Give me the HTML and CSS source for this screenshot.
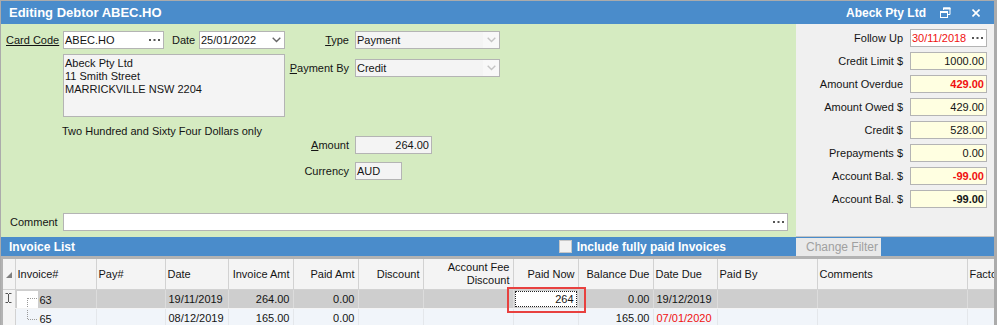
FILE: index.html
```html
<!DOCTYPE html>
<html lang="en">
<head>
    <meta charset="UTF-8">
    <title>Editing Debtor ABEC.HO</title>
    <link rel="stylesheet" href="styles.css">
</head>
<body>
<div class="window">
    <div class="titlebar">
        <span class="title">Editing Debtor ABEC.HO</span>
        <span class="company">Abeck Pty Ltd</span>
        <svg class="restore" width="11" height="11" viewBox="0 0 11 11">
            <path d="M3.5 3 V1 H10 V7.5 H8" fill="none" stroke="#fff" stroke-width="1"/>
            <path d="M3 1.5 H10.5" stroke="#fff" stroke-width="2"/>
            <rect x="0.5" y="4.5" width="7" height="6" fill="none" stroke="#fff" stroke-width="1"/>
            <path d="M0 5 H8" stroke="#fff" stroke-width="2"/>
        </svg>
        <svg class="close" width="8" height="8" viewBox="0 0 8 8">
            <path d="M0.5 0.5 L7.5 7.5 M7.5 0.5 L0.5 7.5" stroke="#fff" stroke-width="1.6"/>
        </svg>
    </div>

    <div class="main">
        <div class="form">
            <div class="top">
                <div class="left">
                    <div class="row">
                        <span class="label link">Card Code</span>
                        <div class="field code">
                            <span class="val">ABEC.HO</span>
                            <svg class="dots" width="11" height="2" viewBox="0 0 11 2"><rect x="0" width="2" height="2"/><rect x="4.5" width="2" height="2"/><rect x="9" width="2" height="2"/></svg>
                        </div>
                        <span class="label date-label">Date</span>
                        <div class="field date">
                            <span class="val">25/01/2022</span>
                            <svg class="chev" width="9" height="6" viewBox="0 0 9 6"><path d="M0.7 0.7 L4.5 4.5 L8.3 0.7" fill="none" stroke="#666" stroke-width="1.4"/></svg>
                        </div>
                    </div>
                    <div class="address">
                        Abeck Pty Ltd<br>
                        11 Smith Street<br>
                        MARRICKVILLE NSW 2204
                    </div>
                    <div class="words">Two Hundred and Sixty Four Dollars only</div>
                </div>

                <div class="mid">
                    <div class="row">
                        <span class="mlabel"><u>T</u>ype</span>
                        <div class="field combo">
                            <span class="val">Payment</span>
                            <span class="drop"><svg width="9" height="6" viewBox="0 0 9 6"><path d="M0.7 0.7 L4.5 4.5 L8.3 0.7" fill="none" stroke="#c4c4c4" stroke-width="1.4"/></svg></span>
                        </div>
                    </div>
                    <div class="row gap-pay">
                        <span class="mlabel"><u>P</u>ayment By</span>
                        <div class="field combo">
                            <span class="val">Credit</span>
                            <span class="drop"><svg width="9" height="6" viewBox="0 0 9 6"><path d="M0.7 0.7 L4.5 4.5 L8.3 0.7" fill="none" stroke="#c4c4c4" stroke-width="1.4"/></svg></span>
                        </div>
                    </div>
                    <div class="row gap-amount">
                        <span class="mlabel"><u>A</u>mount</span>
                        <div class="field amount">264.00</div>
                    </div>
                    <div class="row gap-currency">
                        <span class="mlabel">Currency</span>
                        <div class="field currency">AUD</div>
                    </div>
                </div>
            </div>

            <div class="row comment-row">
                <span class="label comment-label">Comment</span>
                <div class="field comment">
                    <span class="val"></span>
                    <svg class="dots" width="11" height="2" viewBox="0 0 11 2"><rect x="0" width="2" height="2"/><rect x="4.5" width="2" height="2"/><rect x="9" width="2" height="2"/></svg>
                </div>
            </div>
        </div>

        <div class="side">
            <div class="srow">
                <span class="slabel">Follow Up</span>
                <div class="field sfield follow">
                    <span class="val red">30/11/2018</span>
                    <svg class="dots" width="11" height="2" viewBox="0 0 11 2"><rect x="0" width="2" height="2"/><rect x="4.5" width="2" height="2"/><rect x="9" width="2" height="2"/></svg>
                </div>
            </div>
            <div class="srow"><span class="slabel">Credit Limit $</span><div class="field sfield num">1000.00</div></div>
            <div class="srow"><span class="slabel">Amount Overdue</span><div class="field sfield num bold red">429.00</div></div>
            <div class="srow"><span class="slabel">Amount Owed $</span><div class="field sfield num">429.00</div></div>
            <div class="srow"><span class="slabel">Credit $</span><div class="field sfield num">528.00</div></div>
            <div class="srow"><span class="slabel">Prepayments $</span><div class="field sfield num">0.00</div></div>
            <div class="srow"><span class="slabel">Account Bal. $</span><div class="field sfield num bold red">-99.00</div></div>
            <div class="srow"><span class="slabel">Account Bal. $</span><div class="field sfield num bold">-99.00</div></div>
        </div>
    </div>

    <div class="listbar">
        <div class="listbar-left">
            <span class="list-title">Invoice List</span>
            <span class="checkbox"></span>
            <span class="include">Include fully paid Invoices</span>
        </div>
        <div class="btn">Change Filter</div>
    </div>

    <div class="list">
        <table class="grid">
            <colgroup>
                <col class="c-ind"><col class="c-inv"><col class="c-pay"><col class="c-date">
                <col class="c-65"><col class="c-65"><col class="c-65"><col class="c-fee">
                <col class="c-65"><col class="c-bal"><col class="c-due"><col class="c-by">
                <col class="c-com"><col class="c-fac">
            </colgroup>
            <thead>
                <tr>
                    <th class="ind"><svg width="6" height="6" viewBox="0 0 6 6"><path d="M6 0 V6 H0 Z" fill="#808080"/></svg></th>
                    <th>Invoice#</th>
                    <th>Pay#</th>
                    <th>Date</th>
                    <th class="r">Invoice Amt</th>
                    <th class="r">Paid Amt</th>
                    <th class="r">Discount</th>
                    <th class="r">Account Fee<br>Discount</th>
                    <th class="r">Paid Now</th>
                    <th class="r">Balance Due</th>
                    <th>Date Due</th>
                    <th>Paid By</th>
                    <th>Comments</th>
                    <th>Factor</th>
                </tr>
            </thead>
            <tbody>
                <tr class="sel">
                    <td class="ind"><svg width="7" height="10" viewBox="0 0 7 10"><path d="M0.5 0.5 H3 M4 0.5 H6.5 M3.5 1 V9 M0.5 9.5 H3 M4 9.5 H6.5" fill="none" stroke="#555" stroke-width="1"/></svg></td>
                    <td class="tree"><svg width="21" height="17" viewBox="0 0 21 17"><rect width="21" height="17" fill="#fff"/><path d="M10.5 7 V17 M11 7.5 H20" fill="none" stroke="#999" stroke-width="1" stroke-dasharray="1 1"/></svg><span>63</span></td>
                    <td></td>
                    <td>19/11/2019</td>
                    <td class="r">264.00</td>
                    <td class="r">0.00</td>
                    <td></td>
                    <td></td>
                    <td class="paid-now">
                        <div class="edit">264</div>
                        <div class="mark"></div>
                    </td>
                    <td class="r">0.00</td>
                    <td>19/12/2019</td>
                    <td></td>
                    <td></td>
                    <td></td>
                </tr>
                <tr class="alt">
                    <td class="ind"></td>
                    <td class="tree"><svg width="21" height="17" viewBox="0 0 21 17"><path d="M10.5 0 V9 M11 9.5 H20" fill="none" stroke="#999" stroke-width="1" stroke-dasharray="1 1"/></svg><span>65</span></td>
                    <td></td>
                    <td>08/12/2019</td>
                    <td class="r">165.00</td>
                    <td class="r">0.00</td>
                    <td></td>
                    <td></td>
                    <td></td>
                    <td class="r">165.00</td>
                    <td class="red">07/01/2020</td>
                    <td></td>
                    <td></td>
                    <td></td>
                </tr>
            </tbody>
        </table>
    </div>
</div>
</body>
</html>
```

FILE: styles.css
```css
body {
    margin: 0;
    font-family: "Liberation Sans", Arial, sans-serif;
    font-size: 11px;
    color: #141414;
    background: #fff;
}
.window {
    width: 993px;
    height: 324px;
    border: solid #ababab;
    border-width: 1px 3px 0 1px;
    display: flex;
    flex-direction: column;
    overflow: hidden;
}

/* title bar */
.titlebar {
    height: 23px;
    flex: none;
    background: #4a8ccb;
    color: #fff;
    font-weight: bold;
    display: flex;
    align-items: center;
    padding: 0 14px 0 8px;
}
.title {
    font-size: 13px;
    flex: 1;
}
.company {
    font-size: 12px;
    margin-right: 14px;
}
.restore {
    margin-right: 21px;
}

/* main area */
.main {
    height: 213px;
    flex: none;
    display: flex;
}
.form {
    flex: 1;
    background: #d5ebc1;
    padding: 7px 0 6px 5px;
    display: flex;
    flex-direction: column;
}
.top {
    display: flex;
    flex: 1;
}
.row {
    display: flex;
    align-items: center;
}
.label {
    width: 57px;
    flex: none;
    white-space: nowrap;
}
.link {
    text-decoration: underline;
}
.field {
    height: 18px;
    box-sizing: border-box;
    border: 1px solid #b4b4b4;
    background: #fff;
    display: flex;
    align-items: center;
    padding: 0 2px 0 1px;
    white-space: nowrap;
}
.field .val {
    flex: 1;
}
.dots {
    fill: #555;
    margin-right: 1px;
}
.code {
    width: 101px;
}
.date-label {
    width: 27px;
    margin-left: 8px;
}
.date {
    width: 86px;
}
.chev {
    margin-right: 1px;
}
.address {
    margin: 5px 0 0 57px;
    width: 222px;
    height: 63px;
    box-sizing: border-box;
    border: 1px solid #b4b4b4;
    background: #f4f4f4;
    padding: 2px 1px;
    line-height: 13px;
}
.words {
    margin: 8px 0 0 56px;
}

.mlabel {
    width: 64px;
    margin-right: 6px;
    text-align: right;
    white-space: nowrap;
    flex: none;
}
.combo {
    width: 145px;
    background: #f4f4f4;
    padding-right: 0;
}
.drop {
    width: 16px;
    height: 16px;
    background: #f8f8f8;
    display: flex;
    align-items: center;
    justify-content: center;
}
.gap-pay {
    margin-top: 10px;
}
.gap-amount {
    margin-top: 59px;
}
.gap-currency {
    margin-top: 8px;
}
.amount {
    width: 77px;
    background: #f4f4f4;
    justify-content: flex-end;
}
.currency {
    width: 47px;
    background: #f4f4f4;
}
.comment-label {
    box-sizing: border-box;
    padding-left: 4px;
}
.comment {
    width: 725px;
}

/* side panel */
.side {
    width: 198px;
    flex: none;
    background: #f0f0f0;
    border-bottom: 1px solid #c4c4c4;
    box-sizing: border-box;
    padding-top: 5px;
}
.srow {
    display: flex;
    align-items: center;
    margin-bottom: 5px;
}
.slabel {
    flex: 1;
    text-align: right;
    padding-right: 7px;
}
.sfield {
    width: 77px;
    margin-right: 7px;
    background: #ffffe1;
}
.num {
    justify-content: flex-end;
}
.follow {
    background: #fff;
}
.bold {
    font-weight: bold;
}
.red {
    color: #f01010;
}

/* invoice list bar */
.listbar {
    height: 19px;
    flex: none;
    display: flex;
    background: #4a8ccb;
}
.listbar-left {
    width: 795px;
    box-sizing: border-box;
    display: flex;
    align-items: center;
    padding: 0 70px 0 8px;
    color: #fff;
    font-weight: bold;
    font-size: 12px;
}
.list-title {
    flex: 1;
}
.checkbox {
    width: 13px;
    height: 13px;
    box-sizing: border-box;
    background: #f2f2f2;
    border: 1px solid #c7c7c7;
    margin-right: 5px;
}
.btn {
    width: 85px;
    margin-top: 1px;
    box-sizing: border-box;
    background: #e9e9e9;
    color: #a0a0a0;
    padding-left: 10px;
    display: flex;
    align-items: center;
    font-size: 12px;
}

/* grid */
.list {
    flex: 1;
    border-top: 3px solid #b3b3b3;
    border-left: 2px solid #b3b3b3;
    overflow: hidden;
    background: #fff;
}
.grid {
    table-layout: fixed;
    border-collapse: collapse;
    width: 1024px;
}
.c-ind { width: 12px; }
.c-inv { width: 81px; }
.c-pay { width: 69px; }
.c-date { width: 63px; }
.c-65 { width: 65px; }
.c-fee { width: 90px; }
.c-bal { width: 75px; }
.c-due { width: 64px; }
.c-by { width: 100px; }
.c-com { width: 150px; }
.c-fac { width: 60px; }

.grid th {
    height: 30px;
    background: #f4f4f4;
    border-right: 1px solid #d2d2d2;
    border-bottom: 1px solid #d2d2d2;
    font-weight: normal;
    text-align: left;
    padding: 0 2px;
    line-height: 13px;
    white-space: nowrap;
    overflow: hidden;
}
.grid td {
    height: 18px;
    padding: 0 3px;
    border-right: 1px solid #dcdcdc;
    white-space: nowrap;
    overflow: hidden;
}
.grid .r {
    text-align: right;
    padding-right: 3px;
}
.grid .ind {
    padding: 0;
    text-align: center;
    background: #f4f4f4;
    border-right: 1px solid #d2d2d2;
}
.sel td {
    background: #cecece;
    border-bottom: 1px solid #f4f4f4;
}
.alt td {
    background: #f1f5fa;
    border-right-color: #e4e7eb;
}
.grid td.tree {
    padding: 0;
}
.tree svg {
    vertical-align: middle;
    margin: 0 2px 0 1px;
}
.tree span {
    vertical-align: middle;
}
.grid td.paid-now {
    position: relative;
    padding: 0;
    overflow: visible;
}
.edit {
    margin: 0 1px;
    height: 16px;
    box-sizing: border-box;
    background: #fff;
    border: 1px dotted #222;
    text-align: right;
    padding-right: 2px;
    line-height: 14px;
}
.mark {
    position: absolute;
    left: -7px;
    top: -3px;
    width: 79px;
    height: 26px;
    box-sizing: border-box;
    border: 2px solid #e8413f;
}
```
